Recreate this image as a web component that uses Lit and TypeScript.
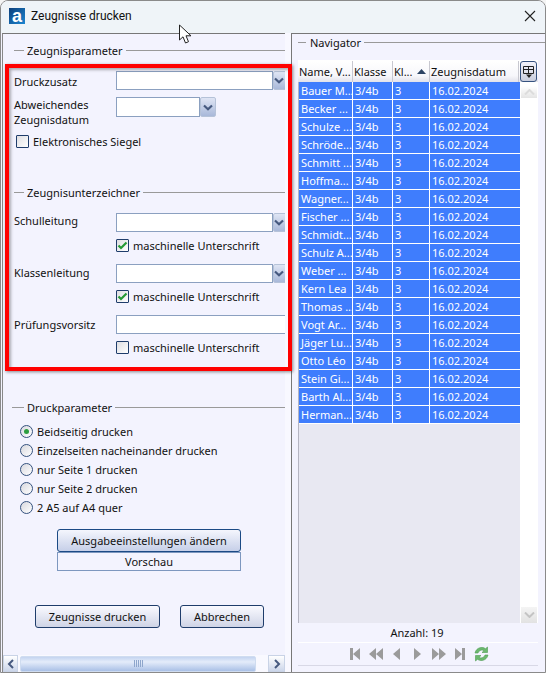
import { LitElement, html, css } from "lit";
import { customElement } from "lit/decorators.js";

const names = ["Bauer M...","Becker ...","Schulze ...","Schröde...","Schmitt ...","Hoffma...","Wagner...","Fischer ...","Schmidt...","Schulz A...","Weber ...","Kern Lea","Thomas ...","Vogt Ar...","Jäger Lu...","Otto Léo","Stein Gi...","Barth Al...","Herman..."];

const chevron = html`<svg width="10" height="7" viewBox="0 0 10 7"><path d="M1 1.5 L5 5.2 L9 1.5" fill="none" stroke="#46597f" stroke-width="2.2"/></svg>`;

@customElement("app-root")
export class AppRoot extends LitElement {
  static styles = css`
    :host { display: block; width: 546px; height: 673px; overflow: hidden; background: #f4f4f4; font-family: "Noto Sans", "Open Sans", sans-serif; font-size: 11px; color: #111; position: relative; }
    .win { box-sizing: border-box; width: 546px; height: 673px; border: 1px solid #8a8a8a; border-radius: 8px 8px 0 0; display: flex; flex-direction: column; overflow: hidden; background: #f3f3fe; }
    .title { height: 32px; box-sizing: border-box; flex: none; background: #eff4f8; display: flex; align-items: center; padding: 0 10px 2px 8px; gap: 6px; font-family: Roboto, sans-serif; font-size: 12px; }
    .logo { width: 16px; height: 16px; background: linear-gradient(135deg, #0d3f7a, #1c86d1); color: #fff; display: flex; align-items: center; justify-content: center; font: bold 18px/14px "Liberation Sans", sans-serif; }
    .title .t { flex: 1; }
    .close { margin-right: -1px; }
    .body { flex: 1; display: flex; min-height: 0; padding-left: 1px; }
    .left { width: 283px; flex: none; box-sizing: border-box; border-top: 1px solid #777; border-left: 1px solid #888; display: flex; flex-direction: column; overflow: hidden; }
    .split { width: 6px; flex: none; background: #f8f8ff; box-sizing: border-box; }
    .right { flex: 1; border-top: 1px solid #777; border-left: 1px solid #777; display: flex; flex-direction: column; min-width: 0; }
    .legend { display: flex; align-items: center; height: 14px; gap: 3px; color: #111; flex: none; }
    .legend::before { content: ""; width: 10px; height: 1px; background: #999; margin-left: 11px; }
    .legend::after { content: ""; flex: 1; height: 1px; background: #999; }
    .legend.dp::before { width: 12px; margin-left: 9px; }
    .lg1 { margin-top: 9px; }
    .lg2 { margin-top: 37px; }
    .lg3 { margin-top: 46px; }
    .row { display: grid; grid-template-columns: 102px 1fr; padding-left: 11px; flex: none; height: 19px; align-items: center; margin-top: 12px; }
    .row.first { margin-top: 14px; }
    .row.tall { height: 31px; align-items: start; margin-top: 7px; }
    .row.tall .lbl { line-height: 15px; }
    .lbl.dn { padding-top: 2px; }
    .lbl.up { padding-bottom: 2px; }
    .lbl.up2 { padding-bottom: 4px; }
    .combo { display: flex; height: 19px; overflow: hidden; }
    .input { box-sizing: border-box; height: 19px; background: #fff; border: 1px solid #8ba0c0; flex: none; }
    .input.w { width: 157px; }
    .input.s { width: 84px; height: 20px; }
    .input.f { flex: 1; border-right: none; margin-right: -1px; }
    .drop { box-sizing: border-box; width: 16px; flex: none; height: 19px; border: 1px solid #b5c2d8; border-radius: 2px; background: linear-gradient(#dfe5f4, #a8b8d9); display: flex; align-items: center; justify-content: center; }
    .combo.cut .drop { width: 16px; padding-right: 4px; margin-right: -4px; }
    .combo.small { height: 20px; }
    .combo.small .drop { height: 20px; }
    .chk { display: flex; align-items: center; gap: 4px; height: 13px; flex: none; }
    .chk.sub { padding-left: 113px; margin-top: 7px; }
    .chk.top { padding-left: 13px; margin-top: 7px; }
    .box { box-sizing: border-box; width: 13px; height: 13px; border: 1px solid #1f3d6b; border-radius: 1px; background: linear-gradient(135deg, #dedee2, #fff); flex: none; display: flex; align-items: center; justify-content: center; }
    .radios { display: flex; flex-direction: column; gap: 6px; padding-left: 17px; margin-top: 11px; flex: none; }
    .radio { display: flex; align-items: center; gap: 4px; height: 13px; }
    .dot { box-sizing: border-box; width: 13px; height: 13px; border-radius: 50%; border: 1px solid #35527f; background: linear-gradient(135deg, #d8d8de, #fff); display: flex; align-items: center; justify-content: center; flex: none; }
    .dot i { width: 5px; height: 5px; border-radius: 50%; background: #2d9e3f; }
    .btns { display: flex; flex-direction: column; margin: 15px 0 0 54px; width: 184px; flex: none; }
    .btn { box-sizing: border-box; height: 23px; border: 1px solid #1f3d6b; border-radius: 3px; background: linear-gradient(#fafaff, #cfd4e6); display: flex; align-items: center; justify-content: center; }
    .btn.plain { height: 19px; border: 1px solid #7d97bf; border-radius: 0; background: #f3f3fe; }
    .btn.a { background: linear-gradient(#f4f6fd, #c6cfe8); border-color: #1b4a85; }
    .actions { display: flex; gap: 20px; margin: 34px 0 0 32px; flex: none; }
    .actions .b1 { width: 125px; }
    .actions .b2 { width: 84px; }
    .hs { margin-top: auto; height: 17px; display: flex; align-items: center; flex: none; background: #f9f9ff; }
    .hs .arr { box-sizing: border-box; width: 15px; height: 17px; background: linear-gradient(#fff, #ccd6ea); border: 1px solid #c9d3e6; display: flex; align-items: center; justify-content: center; flex: none; }
    .hs .thumb { box-sizing: border-box; width: 236px; height: 16px; margin: 0 12px 0 2px; border: 1px solid #cfdcf0; border-radius: 2px; background: linear-gradient(#c4d4f0, #e4ecfa 35%, #a9c0e6); display: flex; align-items: center; justify-content: center; gap: 1px; flex: none; }
    .thumb i { width: 1px; height: 7px; background: #8ea6cc; }
    .hs .arr.r { width: 17px; }
    .nav-legend { margin-top: 1px; }
    .nav-legend::before { width: 8px; margin-left: 6px; margin-right: 1px; }
    .grid { margin: 11px 7px 0 6px; flex: 1; min-height: 0; display: flex; flex-direction: column; background: #fff; border-top: 1px solid #fff; }
    .gh { display: flex; height: 21px; flex: none; background: linear-gradient(#fff, #f7f7fb 70%, #e2e2ea); }
    .gh .c { box-sizing: border-box; display: flex; align-items: center; padding-left: 1px; border-right: 1px solid #c8c8d0; overflow: hidden; white-space: nowrap; flex: none; }
    .w1 { width: 55px; } .w2 { width: 40px; } .w3 { width: 37px; } .w4 { width: 89px; }
    .gh .w3 { justify-content: space-between; padding-right: 3px; }
    .corner { box-sizing: border-box; width: 17px; height: 21px; border: 1px solid #35527f; border-radius: 3px; background: linear-gradient(#f4f4fa, #c9cede); display: flex; align-items: center; justify-content: center; margin-left: 1px; flex: none; }
    .gb { flex: 1; display: flex; min-height: 0; }
    .rows { flex: 1; background: #e8e8f2; border-left: 1px solid #b5b5c2; min-width: 0; }
    .r { display: flex; height: 18px; box-sizing: border-box; border-bottom: 1px solid #fff; color: #fff; background: #3f7dfd; }
    .r span { box-sizing: border-box; display: flex; align-items: center; padding-left: 2px; border-right: 1px solid #fff; white-space: nowrap; overflow: hidden; flex: none; }
    .r .w1 { width: 54px; }
    .r .w4 { border-right: none; }
    .vs { width: 17px; margin-left: 1px; flex: none; display: flex; flex-direction: column; justify-content: space-between; background: #fff; padding: 4px 1px 0 0; box-sizing: border-box; }
    .vs div { height: 12px; background: linear-gradient(#fff, #e4e4e4); display: flex; align-items: center; justify-content: center; }
    .vs div.dn { height: 16px; background: linear-gradient(#f4f4f4, #e2e2e2); }
    .count { height: 19px; flex: none; display: flex; align-items: center; justify-content: center; padding-right: 3px; }
    .nav { margin: 0 7px 0 6px; height: 24px; box-sizing: border-box; border-top: 1px solid #fff; border-bottom: 1px solid #d8d8e6; flex: none; display: flex; align-items: center; justify-content: center; padding-left: 3px; }
    .nav svg { flex: none; }
    .g8 { margin-left: 8px; } .g9 { margin-left: 9px; } .g10 { margin-left: 10px; } .g11 { margin-left: 11px; } .g14 { margin-left: 14px; }
    .bottom { height: 6px; flex: none; }
    .mark { position: absolute; left: 5px; top: 64px; width: 287px; height: 307px; box-sizing: border-box; border: 4px solid #f00; box-shadow: 1px 1px 3px rgba(0,0,0,.45), inset 3px 3px 3px -1px rgba(0,0,0,.3); pointer-events: none; }
    .cursor { position: absolute; left: 178px; top: 24px; }
  `;

  check() {
    return html`<svg width="11" height="9" viewBox="0 0 11 9"><path d="M1.5 4.5 L4 7 L9.5 1.5" fill="none" stroke="#259a35" stroke-width="2.2"/></svg>`;
  }

  sub(on: boolean) {
    return html`<div class="chk sub"><span class="box">${on ? this.check() : ""}</span>maschinelle Unterschrift</div>`;
  }

  navIcons() {
    const g = "#9b9b9b";
    return html`
      <svg width="10" height="12" viewBox="0 0 10 12"><path fill="${g}" d="M0 0h3v12H0zM10 0v12L3 6z"/></svg>
      <svg class="g9" width="14" height="12" viewBox="0 0 14 12"><path fill="${g}" d="M7 0v12L0 6zM14 0v12L7 6z"/></svg>
      <svg class="g10" width="7" height="12" viewBox="0 0 7 12"><path fill="${g}" d="M7 0v12L0 6z"/></svg>
      <svg class="g14" width="7" height="12" viewBox="0 0 7 12"><path fill="${g}" d="M0 0v12L7 6z"/></svg>
      <svg class="g11" width="14" height="12" viewBox="0 0 14 12"><path fill="${g}" d="M0 0v12L7 6zM7 0v12L14 6z"/></svg>
      <svg class="g9" width="10" height="12" viewBox="0 0 10 12"><path fill="${g}" d="M10 0H7v12h3zM0 0v12L7 6z"/></svg>
      <svg class="g8" width="17" height="16" viewBox="0 0 17 16"><path fill="#6cb96f" stroke="#4d9a52" stroke-width=".6" d="M2 7C3 3 6 1.500 9 1.500c1.500 0 2.500.5 3.500 1.200L14.500 1v5.500H9l2-1.800C10 4 9 4 8 4.200 6.500 4.500 5.500 5.500 5 7zM15 9c-1 4-4 5.500-7 5.500-1.500 0-2.500-.5-3.500-1.200L2.500 15V9.500H8l-2 1.800c1 .7 2 .7 3 .5 1.500-.3 2.500-1.300 3-2.800z"/></svg>
    `;
  }

  render() {
    return html`
      <div class="win">
        <div class="title">
          <span class="logo">a</span>
          <span class="t">Zeugnisse drucken</span>
          <svg class="close" width="12" height="12" viewBox="0 0 12 12"><path d="M1 1 L11 11 M11 1 L1 11" stroke="#222" stroke-width="1.100"/></svg>
        </div>
        <div class="body">
          <div class="left">
            <div class="legend lg1">Zeugnisparameter</div>
            <div class="row first"><span class="lbl dn">Druckzusatz</span>
              <div class="combo cut"><div class="input w"></div><div class="drop">${chevron}</div></div></div>
            <div class="row tall"><span class="lbl">Abweichendes<br />Zeugnisdatum</span>
              <div class="combo small"><div class="input s"></div><div class="drop">${chevron}</div></div></div>
            <div class="chk top"><span class="box"></span>Elektronisches Siegel</div>
            <div class="legend lg2">Zeugnisunterzeichner</div>
            <div class="row first"><span class="lbl up2">Schulleitung</span>
              <div class="combo cut"><div class="input w"></div><div class="drop">${chevron}</div></div></div>
            ${this.sub(true)}
            <div class="row"><span class="lbl up">Klassenleitung</span>
              <div class="combo cut"><div class="input w"></div><div class="drop">${chevron}</div></div></div>
            ${this.sub(true)}
            <div class="row"><span class="lbl">Prüfungsvorsitz</span>
              <div class="combo"><div class="input f"></div></div></div>
            ${this.sub(false)}
            <div class="legend dp lg3">Druckparameter</div>
            <div class="radios">
              <div class="radio"><span class="dot"><i></i></span>Beidseitig drucken</div>
              <div class="radio"><span class="dot"></span>Einzelseiten nacheinander drucken</div>
              <div class="radio"><span class="dot"></span>nur Seite 1 drucken</div>
              <div class="radio"><span class="dot"></span>nur Seite 2 drucken</div>
              <div class="radio"><span class="dot"></span>2 A5 auf A4 quer</div>
            </div>
            <div class="btns">
              <div class="btn a">Ausgabeeinstellungen ändern</div>
              <div class="btn plain">Vorschau</div>
            </div>
            <div class="actions">
              <div class="btn b1">Zeugnisse drucken</div>
              <div class="btn b2">Abbrechen</div>
            </div>
            <div class="hs">
              <div class="arr"><svg width="8" height="10" viewBox="0 0 8 10"><path d="M6 1 L2 5 L6 9" fill="none" stroke="#46597f" stroke-width="2"/></svg></div>
              <div class="thumb"><i></i><i></i><i></i><i></i><i></i></div>
              <div class="arr r"><svg width="8" height="10" viewBox="0 0 8 10"><path d="M2 1 L6 5 L2 9" fill="none" stroke="#46597f" stroke-width="2"/></svg></div>
            </div>
          </div>
          <div class="split"></div>
          <div class="right">
            <div class="legend nav-legend">Navigator</div>
            <div class="grid">
              <div class="gh">
                <div class="c w1">Name, V...</div>
                <div class="c w2">Klasse</div>
                <div class="c w3">Kl...<svg width="9" height="5" viewBox="0 0 9 5"><path d="M0 5 L4.500 0 L9 5z" fill="#2c4464"/></svg></div>
                <div class="c w4">Zeugnisdatum</div>
                <div class="corner"><svg width="13" height="14" viewBox="0 0 13 14"><path d="M1.500 1.500h10v7h-10zM1.500 4.500h10M6.500 1.500v7" fill="none" stroke="#222"/><path d="M4 9.500h6L7 13z" fill="#222"/></svg></div>
              </div>
              <div class="gb">
                <div class="rows">
                  ${names.map((n) => html`<div class="r"><span class="w1">${n}</span><span class="w2">3/4b</span><span class="w3">3</span><span class="w4">16.02.2024</span></div>`)}
                </div>
                <div class="vs">
                  <div><svg width="11" height="6" viewBox="0 0 11 6"><path d="M1 5.500 L5.500 1 L10 5.500" fill="none" stroke="#dcdcdc" stroke-width="2"/></svg></div>
                  <div class="dn"><svg width="11" height="6" viewBox="0 0 11 6"><path d="M1 .5 L5.500 5 L10 .5" fill="none" stroke="#c4c4c4" stroke-width="2"/></svg></div>
                </div>
              </div>
            </div>
            <div class="count">Anzahl: 19</div>
            <div class="nav">${this.navIcons()}</div>
            <div class="bottom"></div>
          </div>
        </div>
      </div>
      <div class="mark"></div>
      <svg class="cursor" width="15" height="21" viewBox="0 0 15 21"><path d="M1.500 1 V16 L5 12.800 L7.500 19 L10.500 17.700 L8 11.800 H13z" fill="#fff" stroke="#222" stroke-width="1"/></svg>
    `;
  }
}
